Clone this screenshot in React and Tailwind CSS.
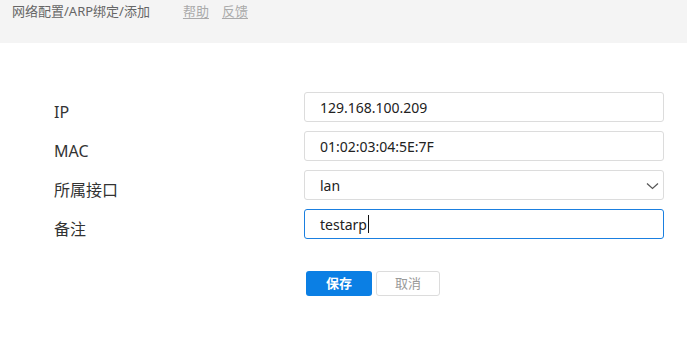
import React from 'react';

const font = { fontFamily: '"Noto Sans", "Noto Sans CJK SC", sans-serif' };

const Field = ({ label, children }) => (
  <div className="flex items-start">
    <div className="w-[304px] shrink-0 pl-[54px] pt-[10px] text-[16px] leading-[20px] text-[#333]">{label}</div>
    {children}
  </div>
);

const Box = ({ focused, children }) => (
  <div
    className={`w-[360px] h-[30px] shrink-0 rounded-[3px] border px-[15px] flex items-center text-[14px] text-[#222] ${
      focused ? 'border-[#1a7fe0]' : 'border-[#dcdcdc]'
    }`}
  >
    {children}
  </div>
);

export default function App() {
  return (
    <div className="w-[687px] h-[345px] bg-white overflow-hidden" style={font}>
      <div className="h-[43px] bg-[#f4f4f4] pl-[12px] pt-[1px] flex items-start text-[13px] leading-[20px]">
        <span className="text-[#666]">网络配置/ARP绑定/添加</span>
        <span className="ml-[33px] text-[#aaa] underline underline-offset-2">帮助</span>
        <span className="ml-[13px] text-[#aaa] underline underline-offset-2">反馈</span>
      </div>

      <div className="mt-[49px] flex flex-col gap-[9px]">
        <Field label="IP">
          <Box>129.168.100.209</Box>
        </Field>
        <Field label="MAC">
          <Box>01:02:03:04:5E:7F</Box>
        </Field>
        <Field label="所属接口">
          <Box>
            <span className="flex-1">lan</span>
            <svg width="13" height="8" viewBox="0 0 13 8" className="mr-[-11px] mt-[1px]">
              <path d="M1 1.5 L6.5 6.5 L12 1.5" fill="none" stroke="#555" strokeWidth="1.2" />
            </svg>
          </Box>
        </Field>
        <Field label="备注">
          <Box focused>
            <span>testarp</span>
            <span className="w-px h-[18px] bg-[#111] ml-[1px]" />
          </Box>
        </Field>
      </div>

      <div className="mt-[32px] ml-[306px] flex gap-[4px]">
        <button className="w-[66px] h-[25px] rounded-[3px] bg-[#0b7fe4] text-white text-[13px] font-bold leading-none">
          保存
        </button>
        <button className="w-[64px] h-[25px] rounded-[3px] border border-[#dcdcdc] bg-white text-[#999] text-[13px] leading-none">
          取消
        </button>
      </div>
    </div>
  );
}
